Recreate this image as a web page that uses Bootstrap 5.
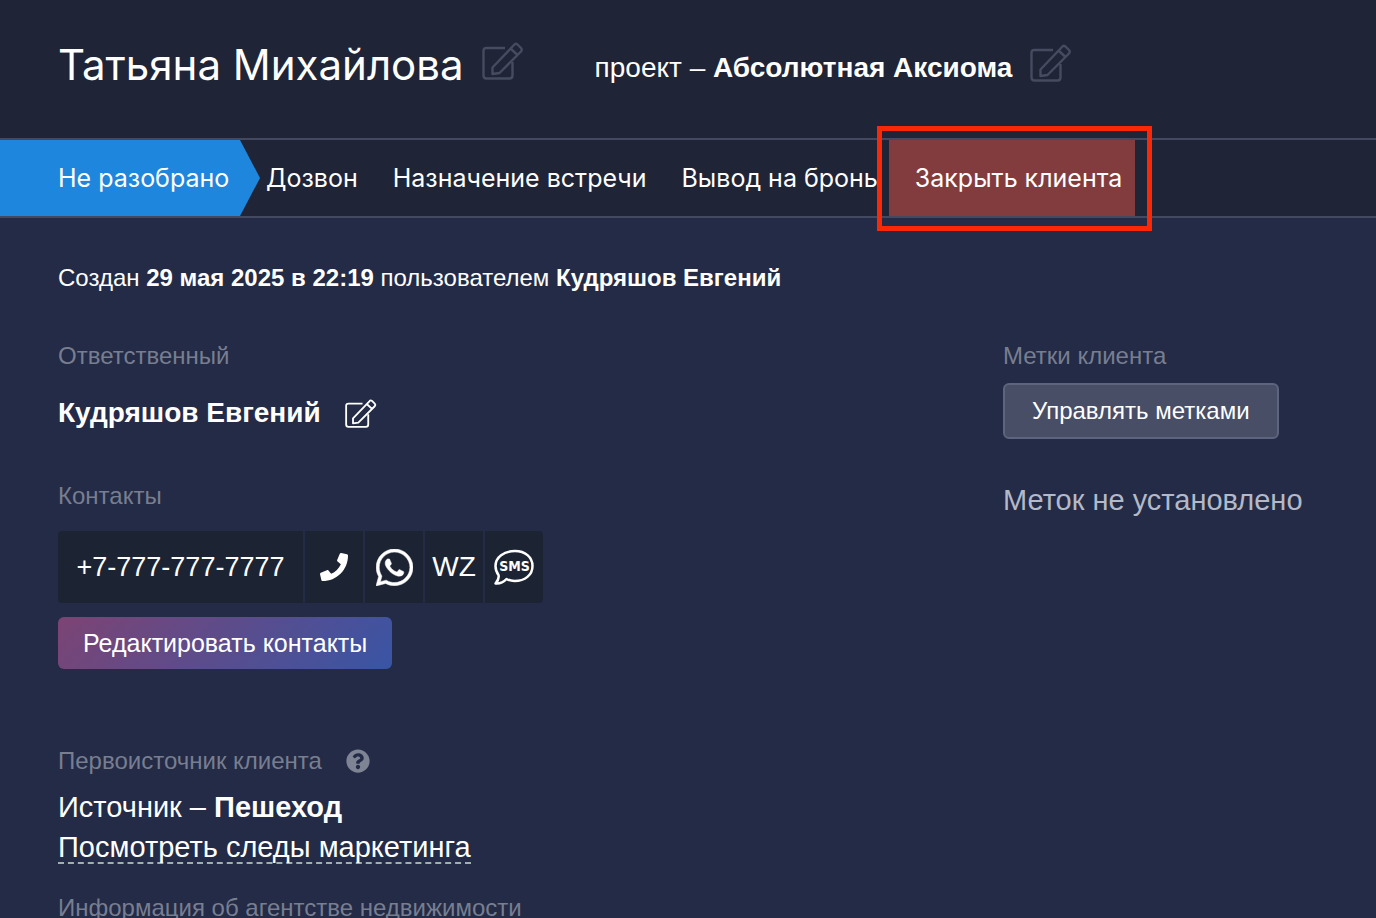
<!DOCTYPE html>
<html lang="ru">
<head>
<meta charset="utf-8">
<meta name="viewport" content="width=device-width, initial-scale=1">
<title>Татьяна Михайлова</title>
<link href="https://cdn.jsdelivr.net/npm/bootstrap@5.3.0/dist/css/bootstrap.min.css" rel="stylesheet">
<style>
  :root { --gutter: 58px; }
  body { background: #232b46; color: #fff; font-family: "Liberation Sans", Arial, sans-serif; font-size: 24px; line-height: 32px; overflow-x: hidden; }
  .page-x { padding-left: var(--gutter); padding-right: var(--gutter); }
  .client-head { background: #1f2437; min-height: 138px; padding-bottom: 8px; }
  .client-name { font-family: Inter, "Liberation Sans", sans-serif; font-size: 42px; line-height: 48px; font-weight: 400; }
  .project-line { margin-left: 71px; padding-top: 6px; }
  .text-title { font-size: 28px; line-height: 40px; }
  .text-wide { font-size: 29px; line-height: 40px; }
  .icon-btn { border: 0; padding: 0; background: none; color: #fff; line-height: 0; }
  .icon-dim { color: #464b60; margin-left: 18px; }
  .stages { background: #1f2437; border: solid #434960; border-width: 2px 0; height: 80px; font-family: Inter, "Liberation Sans", sans-serif; font-size: 25px; }
  .stage { border: 0; background: none; color: #fff; padding: 0; margin-right: 35px; white-space: nowrap; text-align: left; }
  .stage-active { background: #1f86de; width: 260px; margin-right: 6px; padding-left: var(--gutter); clip-path: polygon(0 0, 240px 0, 100% 50%, 240px 100%, 0 100%); }
  .stage-last { margin-right: 11px; }
  .stage-close { background: #833c3d; margin: 0; padding: 0 13px 0 26px; }
  .callout-frame { position: absolute; inset: -14px -17px -15px -12px; border: 5px solid #f92807; pointer-events: none; }
  .field-label { color: #787e90; font-weight: 400; font-size: 24px; line-height: 32px; margin: 0; }
  .created-line { padding: 44px 0 46px; }
  .owner-row { padding: 21px 0 47px; }
  .phone-bar { gap: 2px; height: 72px; margin: 19px 0 14px; }
  .phone-bar > * { background: #1c2434; color: #fff; border: 0; }
  .phone-num { width: 245px; border-radius: 4px 0 0 4px; font-size: 27px; }
  .phone-act { width: 58px; padding: 0; }
  .phone-act:last-child { border-radius: 0 4px 4px 0; }
  .btn-edit { height: 52px; padding: 0 25px; border: 0; border-radius: 6px; color: #fff; font-size: 25px; background: linear-gradient(135deg, #7c4474, #3955a5); }
  .btn-tags { height: 56px; padding: 0 27px; margin: 11px 0 41px; border: 2px solid #5d647d; border-radius: 6px; color: #fff; background: #474e65; font-size: 24px; }
  .text-soft { color: #b4b9c8; }
  .source-block { padding-top: 76px; }
  .source-line { padding-top: 10px; }
  .trace-link { display: block; width: fit-content; color: #fff; font-size: 29px; line-height: 30px; margin: 5px 0 28px; text-decoration: none; border-bottom: 2px dashed #9fb0ae; }
</style>
</head>
<body>
<svg class="d-none" xmlns="http://www.w3.org/2000/svg">
  <symbol id="edit" viewBox="0 0 42 38" fill="none" stroke="currentColor" stroke-width="2.400" stroke-linejoin="round">
    <path d="M23 6H4.500Q1.500 6 1.500 9V33.500Q1.500 36.500 4.500 36.500H27.500Q30.500 36.500 30.500 33.500V20"/>
    <path d="M10.500 25.500L32 3Q33.500 1 35.500 2.500L39 6Q40.500 7.500 39 9.500L17.500 31L10.500 32Z M28.500 6.500L35.500 13"/>
  </symbol>
</svg>

<header class="client-head page-x d-flex align-items-center">
  <h1 class="client-name mb-0">Татьяна Михайлова</h1>
  <button class="icon-btn icon-dim mb-2" aria-label="Изменить имя"><svg width="42" height="38"><use href="#edit"/></svg></button>
  <div class="project-line text-title">проект – <b>Абсолютная Аксиома</b></div>
  <button class="icon-btn icon-dim mb-1" aria-label="Изменить проект"><svg width="42" height="38"><use href="#edit"/></svg></button>
</header>

<nav class="stages d-flex align-items-stretch" aria-label="Этапы">
  <button class="stage stage-active">Не разобрано</button>
  <button class="stage">Дозвон</button>
  <button class="stage">Назначение встречи</button>
  <button class="stage stage-last">Вывод на бронь</button>
  <div class="position-relative d-flex">
    <button class="stage stage-close">Закрыть клиента</button>
    <span class="callout-frame"></span>
  </div>
</nav>

<main class="page-x">
  <p class="created-line mb-0">Создан <b>29 мая 2025 в 22:19</b> пользователем <b>Кудряшов Евгений</b></p>
  <div class="row g-0">
    <div class="col-9">
      <h2 class="field-label">Ответственный</h2>
      <div class="owner-row d-flex align-items-center">
        <b class="text-title">Кудряшов Евгений</b>
        <button class="icon-btn ms-4" aria-label="Изменить ответственного"><svg width="32" height="29"><use href="#edit"/></svg></button>
      </div>
      <h2 class="field-label">Контакты</h2>
      <div class="phone-bar d-flex">
        <div class="phone-num d-flex align-items-center justify-content-center">+7-777-777-7777</div>
        <button class="phone-act" aria-label="Позвонить"><svg class="d-block mx-auto" width="28" height="28" viewBox="0 0 512 512" fill="#fff"><path d="M493.400 24.600l-104-24c-11.300-2.600-22.900 3.300-27.500 13.900l-48 112c-4.200 9.800-1.400 21.300 6.900 28l60.600 49.600c-36 76.700-98.900 140.500-177.200 177.200l-49.600-60.600c-6.800-8.300-18.200-11.100-28-6.900l-112 48C3.900 366.500-2 378.100.6 389.400l24 104C27.100 504.200 36.700 512 48 512c256.100 0 464-207.500 464-464 0-11.200-7.700-20.900-18.600-23.400z"/></svg></button>
        <button class="phone-act" aria-label="WhatsApp"><svg class="d-block mx-auto" width="37" height="37" viewBox="0 32 448 448" fill="#fff"><path d="M380.900 97.100C339 55.100 283.200 32 223.900 32c-122.400 0-222 99.600-222 222 0 39.100 10.200 77.300 29.600 111L0 480l117.700-30.900c32.400 17.700 68.900 27 106.100 27h.1c122.300 0 224.100-99.600 224.100-222 0-59.300-25.200-115-67.100-157zm-157 341.600c-33.200 0-65.700-8.900-94-25.700l-6.700-4-69.800 18.300L72 359.200l-4.400-7c-18.500-29.400-28.200-63.300-28.200-98.200 0-101.700 82.800-184.500 184.600-184.500 49.300 0 95.600 19.200 130.400 54.100 34.800 34.900 56.200 81.200 56.100 130.500 0 101.800-84.900 184.600-186.600 184.600zm101.200-138.200c-5.500-2.800-32.800-16.200-37.900-18-5.100-1.900-8.800-2.800-12.500 2.800-3.700 5.600-14.300 18-17.600 21.800-3.200 3.700-6.500 4.200-12 1.400-32.600-16.300-54-29.100-75.500-66-5.700-9.800 5.700-9.100 16.300-30.300 1.800-3.700.9-6.900-.5-9.700-1.400-2.800-12.500-30.100-17.100-41.200-4.500-10.800-9.100-9.300-12.500-9.500-3.200-.2-6.900-.2-10.600-.2-3.700 0-9.700 1.400-14.800 6.900-5.100 5.600-19.400 19-19.400 46.300 0 27.300 19.900 53.700 22.600 57.400 2.800 3.700 39.100 59.700 94.800 83.800 35.200 15.200 49 16.500 66.600 13.900 10.700-1.600 32.800-13.400 37.400-26.400 4.600-13 4.600-24.100 3.200-26.400-1.300-2.500-5-3.900-10.500-6.600z" stroke="#fff" stroke-width="6"/></svg></button>
        <button class="phone-act text-title">WZ</button>
        <button class="phone-act" aria-label="SMS"><svg class="d-block mx-auto" width="42" height="38" viewBox="0 0 42 38"><path d="M22 3C32 3 39.500 9 39.500 18S32 33 21.500 33Q17 33 13.500 31Q9 36 2.500 35.500Q6.500 31 5.500 27Q2.500 23 2.500 18C2.500 9 11 3 22 3Z" fill="none" stroke="#fff" stroke-width="2.500" stroke-linejoin="round"/><text x="21.500" y="23" text-anchor="middle" font-family="'Liberation Sans Narrow', 'DejaVu Sans Condensed', sans-serif" font-size="14" font-weight="700" fill="#fff">SMS</text></svg></button>
      </div>
      <button class="btn-edit d-block">Редактировать контакты</button>
      <div class="source-block">
        <h2 class="field-label d-flex align-items-center">Первоисточник клиента
          <button class="icon-btn ms-4" aria-label="Справка"><svg class="d-block" width="24" height="24" viewBox="0 0 512 512" fill="#7f8494"><path d="M504 256c0 137-111 248-248 248S8 393 8 256C8 119.100 119 8 256 8s248 111.100 248 248zM262.700 90c-54.500 0-89.300 23-116.500 63.800-3.500 5.300-2.400 12.400 2.700 16.300l34.700 26.300c5.200 3.900 12.600 3 16.700-2.100 17.900-22.700 30.100-35.800 57.300-35.800 20.400 0 45.700 13.100 45.700 33 0 15-12.400 22.700-32.500 34C247.100 238.500 216 255 216 296v4c0 6.600 5.400 12 12 12h56c6.600 0 12-5.400 12-12v-1.300c0-28.500 83.200-29.600 83.200-106.700 0-58-60.200-102-116.500-102zM256 338c-25.400 0-46 20.600-46 46s20.600 46 46 46 46-20.600 46-46-20.600-46-46-46z"/></svg></button>
        </h2>
        <div class="source-line text-wide">Источник – <b>Пешеход</b></div>
        <a class="trace-link" href="#">Посмотреть следы маркетинга</a>
        <h2 class="field-label">Информация об агентстве недвижимости</h2>
      </div>
    </div>
    <aside class="col-3">
      <h2 class="field-label">Метки клиента</h2>
      <button class="btn-tags d-block text-nowrap">Управлять метками</button>
      <p class="text-wide text-soft text-nowrap mb-0">Меток не установлено</p>
    </aside>
  </div>
</main>
<script src="https://cdn.jsdelivr.net/npm/bootstrap@5.3.0/dist/js/bootstrap.bundle.min.js"></script>
</body>
</html>
